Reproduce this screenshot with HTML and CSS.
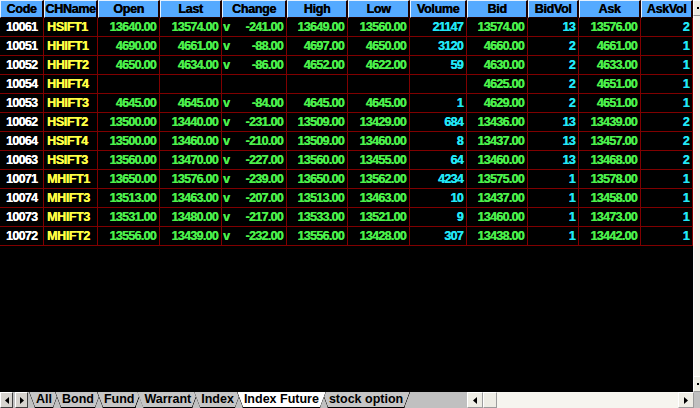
FILE: index.html
```html
<!DOCTYPE html>
<html lang="en">
<head>
    <meta charset="UTF-8">
    <meta name="viewport" content="width=device-width, initial-scale=1.0">
    <title>Quotes</title>
    <link rel="stylesheet" href="styles.css">
</head>
<body>
    <div class="screen">
        <div class="sheet">
            <div class="quotes">
                <div class="row head">
                    <div>Code</div><div>CHName</div><div>Open</div><div>Last</div><div>Change</div><div>High</div>
                    <div>Low</div><div>Volume</div><div>Bid</div><div>BidVol</div><div>Ask</div><div>AskVol</div>
                </div>
                <div class="row">
                    <div class="code">10061</div><div class="name">HSIFT1</div><div>13640.00</div><div>13574.00</div>
                    <div class="chg"><span>v</span>-241.00</div><div>13649.00</div><div>13560.00</div><div class="vol">21147</div>
                    <div>13574.00</div><div class="vol">13</div><div>13576.00</div><div class="vol">2</div>
                </div>
                <div class="row">
                    <div class="code">10051</div><div class="name">HHIFT1</div><div>4690.00</div><div>4661.00</div>
                    <div class="chg"><span>v</span>-88.00</div><div>4697.00</div><div>4650.00</div><div class="vol">3120</div>
                    <div>4660.00</div><div class="vol">2</div><div>4661.00</div><div class="vol">1</div>
                </div>
                <div class="row">
                    <div class="code">10052</div><div class="name">HHIFT2</div><div>4650.00</div><div>4634.00</div>
                    <div class="chg"><span>v</span>-86.00</div><div>4652.00</div><div>4622.00</div><div class="vol">59</div>
                    <div>4630.00</div><div class="vol">2</div><div>4633.00</div><div class="vol">1</div>
                </div>
                <div class="row">
                    <div class="code">10054</div><div class="name">HHIFT4</div><div></div><div></div>
                    <div></div><div></div><div></div><div></div>
                    <div>4625.00</div><div class="vol">2</div><div>4651.00</div><div class="vol">1</div>
                </div>
                <div class="row">
                    <div class="code">10053</div><div class="name">HHIFT3</div><div>4645.00</div><div>4645.00</div>
                    <div class="chg"><span>v</span>-84.00</div><div>4645.00</div><div>4645.00</div><div class="vol">1</div>
                    <div>4629.00</div><div class="vol">2</div><div>4651.00</div><div class="vol">1</div>
                </div>
                <div class="row">
                    <div class="code">10062</div><div class="name">HSIFT2</div><div>13500.00</div><div>13440.00</div>
                    <div class="chg"><span>v</span>-231.00</div><div>13509.00</div><div>13429.00</div><div class="vol">684</div>
                    <div>13436.00</div><div class="vol">13</div><div>13439.00</div><div class="vol">2</div>
                </div>
                <div class="row">
                    <div class="code">10064</div><div class="name">HSIFT4</div><div>13500.00</div><div>13460.00</div>
                    <div class="chg"><span>v</span>-210.00</div><div>13509.00</div><div>13460.00</div><div class="vol">8</div>
                    <div>13437.00</div><div class="vol">13</div><div>13457.00</div><div class="vol">2</div>
                </div>
                <div class="row">
                    <div class="code">10063</div><div class="name">HSIFT3</div><div>13560.00</div><div>13470.00</div>
                    <div class="chg"><span>v</span>-227.00</div><div>13560.00</div><div>13455.00</div><div class="vol">64</div>
                    <div>13460.00</div><div class="vol">13</div><div>13468.00</div><div class="vol">2</div>
                </div>
                <div class="row">
                    <div class="code">10071</div><div class="name">MHIFT1</div><div>13650.00</div><div>13576.00</div>
                    <div class="chg"><span>v</span>-239.00</div><div>13650.00</div><div>13562.00</div><div class="vol">4234</div>
                    <div>13575.00</div><div class="vol">1</div><div>13578.00</div><div class="vol">1</div>
                </div>
                <div class="row">
                    <div class="code">10074</div><div class="name">MHIFT3</div><div>13513.00</div><div>13463.00</div>
                    <div class="chg"><span>v</span>-207.00</div><div>13513.00</div><div>13463.00</div><div class="vol">10</div>
                    <div>13437.00</div><div class="vol">1</div><div>13458.00</div><div class="vol">1</div>
                </div>
                <div class="row">
                    <div class="code">10073</div><div class="name">MHIFT3</div><div>13531.00</div><div>13480.00</div>
                    <div class="chg"><span>v</span>-217.00</div><div>13533.00</div><div>13521.00</div><div class="vol">9</div>
                    <div>13460.00</div><div class="vol">1</div><div>13473.00</div><div class="vol">1</div>
                </div>
                <div class="row">
                    <div class="code">10072</div><div class="name">MHIFT2</div><div>13556.00</div><div>13439.00</div>
                    <div class="chg"><span>v</span>-232.00</div><div>13556.00</div><div>13428.00</div><div class="vol">307</div>
                    <div>13438.00</div><div class="vol">1</div><div>13442.00</div><div class="vol">1</div>
                </div>
            </div>

            <!-- vertical scrollbar, mostly cut off at the window edge -->
            <div class="vscroll">
                <div class="vs-btn"><i></i></div>
                <div class="vs-track"></div>
                <div class="vs-btn"><i></i></div>
            </div>
        </div>

        <div class="bar">
            <div class="nav">
                <span class="nav-btn">
                    <svg width="4" height="7" viewBox="0 0 4 7"><path d="M4 0V7L0 3.5Z" fill="#000"/></svg>
                </span>
                <span class="nav-btn">
                    <svg width="4" height="7" viewBox="0 0 4 7"><path d="M0 0V7L4 3.5Z" fill="#000"/></svg>
                </span>
            </div>
            <div class="tabs">
                <span class="tab">All</span>
                <span class="tab">Bond</span>
                <span class="tab">Fund</span>
                <span class="tab">Warrant</span>
                <span class="tab">Index</span>
                <span class="tab active">Index Future</span>
                <span class="tab">stock option</span>
            </div>
            <div class="hscroll">
                <span class="sb-btn">
                    <svg width="4" height="7" viewBox="0 0 4 7"><path d="M4 0V7L0 3.5Z" fill="#000"/></svg>
                </span>
                <span class="sb-btn thumb"></span>
                <span class="hs-track"></span>
                <span class="sb-btn">
                    <svg width="4" height="7" viewBox="0 0 4 7"><path d="M0 0V7L4 3.5Z" fill="#000"/></svg>
                </span>
            </div>
        </div>
    </div>
</body>
</html>
```

FILE: styles.css
```css
:root {
    --grid-line: #800000;
    --head-bg: #55aaff;
    --green: #4cef4c;
    --cyan: #22e6f6;
    --yellow: #ffff44;
    --bar-bg: #c0c0c0;
    --btn-face: #eeede5;
    --track: #f6f5ef;
}

body {
    margin: 0;
    background: #000;
    font-family: "Liberation Sans", Arial, sans-serif;
    overflow: hidden;
}

.screen {
    width: 700px;
    height: 408px;
    display: flex;
    flex-direction: column;
}

.sheet {
    flex: 1;
    display: flex;
    min-height: 0;
}

.quotes {
    width: 693px;
}

.row {
    display: grid;
    grid-template-columns: 44px 54px 62px 62px 65px 61px 62px 57px 61px 51px 62px 52px;
    height: 19px;
}

.row > div {
    box-sizing: border-box;
    border-right: 1px solid var(--grid-line);
    border-bottom: 1px solid var(--grid-line);
    padding: 0 3px;
    font-size: 12.5px;
    font-weight: bold;
    letter-spacing: -0.7px;
    line-height: 18px;
    text-align: right;
    color: var(--green);
    text-shadow: 0.35px 0 0 currentColor;
    white-space: nowrap;
    overflow: hidden;
}

.row.head {
    height: 18px;
}

.row.head > div {
    background: var(--head-bg);
    color: #000;
    text-align: center;
    font-size: 12.5px;
    letter-spacing: -0.3px;
    line-height: 16px;
    border-top: 1px solid #e4f1ff;
    border-left: 1px solid #e4f1ff;
    border-right: 2px solid #1c0000;
    border-bottom: 1px solid #1c0000;
    padding: 0;
    overflow: visible;
}

.row > .code {
    color: #fff;
    text-align: left;
    padding-left: 6px;
}

.row > .name {
    color: var(--yellow);
    text-align: left;
    padding-left: 3px;
    letter-spacing: -0.4px;
}

.row > .vol {
    color: var(--cyan);
}

.row > .chg {
    display: flex;
    justify-content: space-between;
    padding-left: 1px;
}

/* scrollbars */
.vscroll {
    width: 7px;
    display: flex;
    flex-direction: column;
    background: var(--track);
}

.vs-btn {
    height: 16px;
    box-sizing: border-box;
    background: var(--btn-face);
    border-top: 1px solid #fff;
    border-left: 1px solid #fff;
    border-bottom: 1px solid #9d9d9d;
    display: flex;
    align-items: center;
    padding-left: 3px;
}

.vs-btn i {
    width: 2px;
    height: 2px;
    background: #000;
}

.vs-track {
    flex: 1;
    border-left: 1px solid #fff;
}

.bar {
    height: 16px;
    background: var(--bar-bg);
    display: flex;
}

.nav {
    display: flex;
    gap: 2px;
    width: 29px;
}

.nav-btn {
    width: 13px;
    box-sizing: border-box;
    background: #d6d3ce;
    border: 1px solid;
    border-color: #fff #404040 #404040 #fff;
    display: flex;
    align-items: center;
    justify-content: center;
}

.tabs {
    display: flex;
}

.tab {
    height: 16px;
    padding: 0 7px;
    margin-right: -4px;
    font-size: 12.5px;
    font-weight: bold;
    line-height: 15px;
    color: #000;
    white-space: nowrap;
    background:
        linear-gradient(to top right, transparent calc(50% - 0.8px), #000 50%, transparent calc(50% + 0.8px)) left / 6px 100% no-repeat,
        linear-gradient(to top left, transparent calc(50% - 0.8px), #000 50%, transparent calc(50% + 0.8px)) right / 6px 100% no-repeat,
        linear-gradient(#000, #000) bottom / 100% 1px no-repeat,
        #c6c6c6;
    clip-path: polygon(0 0, 100% 0, calc(100% - 6px) 100%, 6px 100%);
}

.tab.active {
    position: relative;
    z-index: 1;
    background-color: #fff;
}

.hscroll {
    margin-left: auto;
    margin-right: 6px;
    width: 227px;
    display: flex;
    background: var(--track);
}

.sb-btn {
    width: 16px;
    box-sizing: border-box;
    background: var(--btn-face);
    border: 1px solid;
    border-color: #fff #9d9d9d #9d9d9d #fff;
    display: flex;
    align-items: center;
    justify-content: center;
}

.sb-btn.thumb {
    width: 14px;
}

.hs-track {
    flex: 1;
}
```
